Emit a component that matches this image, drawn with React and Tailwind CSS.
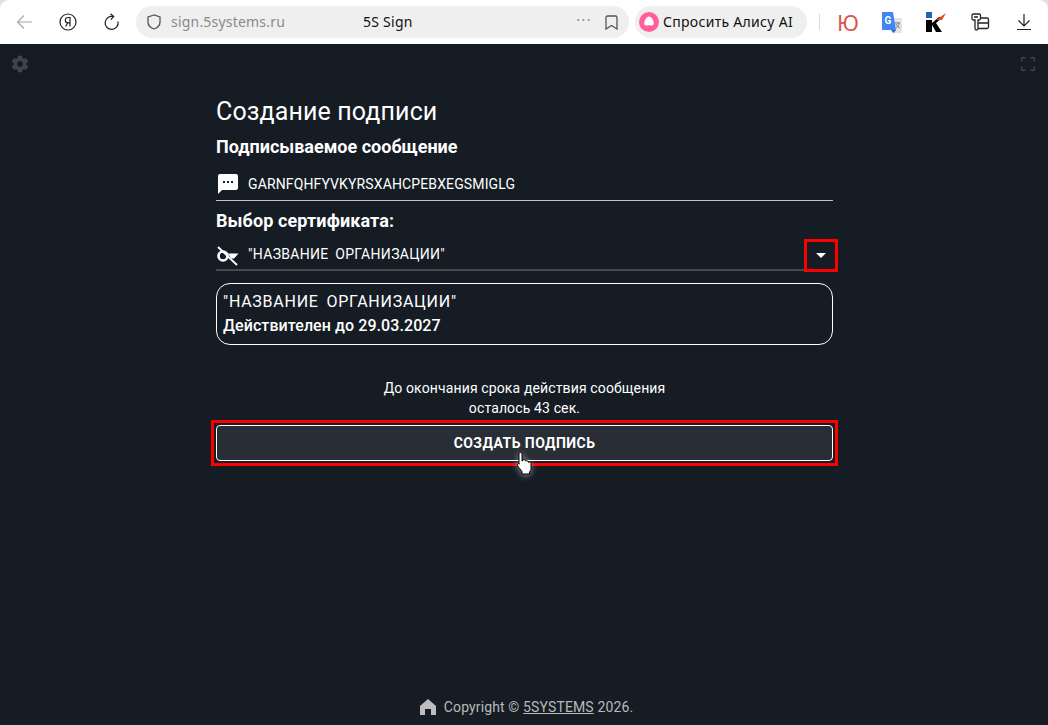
import React from "react";

const roboto = { fontFamily: "Roboto, sans-serif" };

function BrowserBar() {
  return (
    <div className="bg-[#e6dcf0]">
      <div className="flex h-11 items-center rounded-t-[9px] bg-white font-['Noto_Sans',sans-serif] text-[#1a1a1a]">
        <div className="flex w-[136px] shrink-0 items-center">
          <svg className="ml-4 mr-[26px]" width="17" height="16" viewBox="0 0 17 16" fill="none" stroke="#a8a8a8" strokeWidth="1.2">
            <path d="M16 8H1.5M8 1.5 1.5 8 8 14.5" />
          </svg>
          <svg className="mr-[27px]" width="18" height="18" viewBox="0 0 18 18" fill="none" stroke="#222" strokeWidth="1.2">
            <circle cx="9" cy="9" r="8" />
            <path d="M11 13.500v-9H9.200a2.600 2.600 0 0 0-.4 5.300L6.600 13.500M8.800 9.800H11" />
          </svg>
          <svg width="16" height="18" viewBox="0 0 16 18" fill="none" stroke="#222" strokeWidth="1.2">
            <path d="M9.500 3.600A6.500 6.500 0 1 0 14 8.500M6.500.8l3.200 2.800-2.900 3" />
          </svg>
        </div>
        <div className="flex h-8 w-[493px] shrink-0 items-center rounded-2xl bg-[#efefef] pl-[11px] pr-[11px]">
          <svg width="14" height="16" viewBox="0 0 14 16" fill="none" stroke="#555" strokeWidth="1.3">
            <path d="M7 1 1 3v5c0 3.500 3 6 6 7 3-1 6-3.500 6-7V3z" />
          </svg>
          <span className="ml-[10px] w-[192px] text-sm tracking-[0.2px] text-[#8a8a8a]">sign.5systems.ru</span>
          <span className="text-sm tracking-[0.25px] text-[#111]">5S Sign</span>
          <span className="ml-auto mb-1 mr-[13px] text-sm tracking-[1.5px] text-[#8a8a8a]">···</span>
          <svg width="13" height="15" viewBox="0 0 13 15" fill="none" stroke="#555" strokeWidth="1.3">
            <path d="M1 2.500A1.500 1.500 0 0 1 2.500 1h8A1.500 1.500 0 0 1 12 2.500V14L6.500 10.500 1 14z" />
          </svg>
        </div>
        <div className="ml-[6px] flex h-8 w-[172px] shrink-0 items-center rounded-2xl bg-[#efefef] pl-1">
          <svg width="20" height="20" viewBox="0 0 20 20">
            <circle cx="10" cy="10" r="10" fill="#ff5f9c" />
            <path d="M10 4.500c2.200 0 3.500 2.200 4.500 5 1 3-.5 4.500-2.500 4-1.400-.4-2.600-.4-4 0-2 .5-3.500-1-2.500-4 1-2.800 2.300-5 4.500-5z" fill="#fff" />
          </svg>
          <span className="ml-1 text-sm tracking-[0.3px] text-[#111]">Спросить Алису AI</span>
        </div>
        <div className="ml-3 h-4 w-px shrink-0 bg-[#d8d8d8]" />
        <span className="ml-[17px] w-[22px] text-[22px] leading-none text-[#d9564c]">Ю</span>
        <svg className="ml-[23px]" width="20" height="21" viewBox="0 0 20 21">
          <rect x="10" y="6" width="10" height="15" fill="#e4e4e4" />
          <path d="M0 0h11l3 18H0z" fill="#4285f4" />
          <path d="M9 18h5l-2.500 3z" fill="#2a5fc0" />
          <text x="6" y="12" textAnchor="middle" fontSize="10" fontWeight="700" fill="#fff" fontFamily="Roboto, sans-serif">G</text>
          <path d="M13 11h5M15.500 10v1M14 16c2-1 3-3 3-5M14 12c1 2 2 3 4 4" fill="none" stroke="#777" strokeWidth="0.900" />
        </svg>
        <svg className="ml-6" width="20" height="20" viewBox="0 0 20 20">
          <rect x="0" y="0" width="6" height="6" fill="#1f63b5" />
          <path d="M0 8h6v12H0zM6 11l7-6h4l-7 6 6 9h-6l-4-7z" fill="#000" />
          <path d="M10 8l10-7-4 7z" fill="#e8452c" />
        </svg>
        <svg className="ml-[24px]" width="20" height="20" viewBox="0 0 20 20" fill="none" stroke="#222" strokeWidth="1.300">
          <path d="M3.500 2H9a1.500 1.500 0 0 1 1.500 1.500v3A1.500 1.500 0 0 1 9 8H8v8.500a1.500 1.500 0 0 1-3 0V8H3.500A1.500 1.500 0 0 1 2 6.500v-3A1.500 1.500 0 0 1 3.500 2zM4 5h4M10.500 6H17a1.500 1.500 0 0 1 1.500 1.500V15a1.500 1.500 0 0 1-1.500 1.500H8M8 11h10.500" />
        </svg>
        <svg className="ml-[27px]" width="14" height="16" viewBox="0 0 14 16" fill="none" stroke="#222" strokeWidth="1.200">
          <path d="M7 0v11.500M1.500 6.500 7 12l5.500-5.500M0 15.500h14" />
        </svg>
      </div>
    </div>
  );
}

export default function App() {
  return (
    <div className="relative flex h-[725px] flex-col overflow-hidden bg-[#151c24] text-white" style={roboto}>
      <BrowserBar />

      {/* top icons */}
      <div className="flex h-10 shrink-0 items-center justify-between pl-[10px] pr-[13px]">
        <svg width="20" height="20" viewBox="0 0 24 24" fill="#3d444c">
          <path d="M19.430 12.980c.04-.32.07-.64.07-.98s-.03-.66-.07-.98l2.110-1.650c.19-.15.240-.42.120-.64l-2-3.460c-.12-.22-.39-.3-.61-.22l-2.490 1c-.52-.4-1.080-.73-1.690-.98l-.38-2.650C14.460 2.180 14.250 2 14 2h-4c-.25 0-.46.18-.49.420l-.38 2.650c-.61.25-1.170.59-1.690.98l-2.490-1c-.23-.09-.49 0-.61.22l-2 3.460c-.13.22-.07.49.12.64l2.110 1.650c-.04.32-.07.65-.07.98s.03.66.07.98l-2.110 1.650c-.19.15-.24.42-.12.64l2 3.460c.12.22.39.3.61.22l2.490-1c.52.4 1.080.73 1.690.98l.38 2.650c.03.24.24.42.49.42h4c.25 0 .46-.18.49-.42l.38-2.650c.61-.25 1.170-.59 1.690-.98l2.490 1c.23.09.49 0 .61-.22l2-3.460c.12-.22.07-.49-.12-.64l-2.110-1.650zM12 15.500c-1.930 0-3.500-1.570-3.500-3.500s1.570-3.500 3.500-3.500 3.500 1.570 3.500 3.500-1.570 3.500-3.500 3.500z" />
        </svg>
        <svg width="14" height="14" viewBox="0 0 14 14" fill="none" stroke="#3d444c" strokeWidth="1.500">
          <path d="M0.700 4.500V.7h3.800M9.500.7h3.800v3.800M13.300 9.500v3.800H9.500M4.500 13.300H.7V9.500" />
        </svg>
      </div>

      {/* form */}
      <div className="relative ml-[216px] w-[617px]">
        <h1 className="mt-[12px] text-[25px] leading-[32px] tracking-[0.12px] text-white">Создание подписи</h1>
        <h2 className="mt-[7px] text-lg font-bold leading-[24px]">Подписываемое сообщение</h2>

        <div className="mt-[8px] flex h-[34px] items-center border-b border-[#c4c4c4]">
          <svg className="mr-[8px]" width="24" height="24" viewBox="0 0 24 24" fill="#fff">
            <path d="M20 2H4c-1.100 0-2 .9-2 2v18l4-4h14c1.100 0 2-.9 2-2V4c0-1.100-.9-2-2-2zM9 11H7V9h2v2zm4 0h-2V9h2v2zm4 0h-2V9h2v2z" />
          </svg>
          <span className="text-sm tracking-[0.13px] text-white">GARNFQHFYVKYRSXAHCPEBXEGSMIGLG</span>
        </div>

        <h2 className="mt-[8px] text-lg font-bold leading-[24px] tracking-[0.1px]">Выбор сертификата:</h2>

        <div className="mt-[4px] flex h-[34px] items-center border-b-2 border-[#444a50]">
          <svg className="mr-[8px] mt-1" width="24" height="24" viewBox="0 0 24 24" fill="none">
            <circle cx="7" cy="13" r="4.500" stroke="#fff" strokeWidth="2.600" />
            <path d="M2 4 L21 22" stroke="#fff" strokeWidth="1.800" />
            <path d="M12 10.500h10.500l-4.500 5h-3z" fill="#fff" />
          </svg>
          <span className="mt-[2px] text-sm tracking-[0.3px] text-white [word-spacing:3px]">"НАЗВАНИЕ ОРГАНИЗАЦИИ"</span>
          <svg className="ml-auto mr-[7px] mt-[5px]" width="10" height="5" viewBox="0 0 10 5" fill="#fff">
            <path d="M0 0h10L5 5z" />
          </svg>
        </div>

        <div className="mt-[12px] flex h-[62px] flex-col justify-center rounded-[14px] border border-white px-[6px]">
          <span className="text-base leading-[24px] tracking-[0.75px] text-white [word-spacing:3px]">"НАЗВАНИЕ ОРГАНИЗАЦИИ"</span>
          <span className="text-base font-medium leading-[24px] tracking-[0.08px] text-white">Действителен до 29.03.2027</span>
        </div>

        <p className="mt-[33px] text-center text-sm leading-[20px] tracking-[0.13px] text-white">
          До окончания срока действия сообщения
          <br />
          осталось 43 сек.
        </p>

        <button className="mt-[7px] block h-[36px] w-full rounded border border-white bg-[#292d36] pb-[1px] text-sm font-bold tracking-[0.45px] text-white">
          СОЗДАТЬ ПОДПИСЬ
        </button>

        {/* red annotation boxes */}
        <div className="absolute left-[588px] top-[155px] h-[33px] w-[34px] border-[3px] border-[#ff0000]" />
        <div className="absolute left-[-5px] top-[336px] h-[46px] w-[627px] border-[3px] border-[#ff0000]" />

        {/* pointer cursor */}
        <svg className="absolute left-[300px] top-[367px] drop-shadow-[0_1px_3px_rgba(255,255,255,0.5)]" width="18" height="24" viewBox="0 0 18 24">
          <path d="M4.500 1.500c1 0 1.500.7 1.500 1.500v7l.8-.2V8.500c1.500-.6 2.200 0 2.200 1.200l.8.1c1.400-.5 2.200.2 2.200 1.300l.8.1c1.300-.4 2.200.3 2.200 1.500v4.800c0 1.500-.8 2.500-1.500 3.500v2H6v-2.500c-1-1.500-3.500-4-4.500-6-.5-1.200.6-2.200 1.700-1.500L3 13V3c0-.8.600-1.500 1.500-1.500z" fill="#fff" stroke="#000" strokeWidth="1" />
        </svg>
      </div>

      {/* footer */}
      <div className="mt-auto mb-[8px] flex h-[20px] items-center justify-center pl-[4px] text-sm tracking-[0.13px] text-[#b9b9b9]">
        <svg className="mr-[7px]" width="18" height="18" viewBox="0 0 18 18" fill="#bdbdbd">
          <path d="M9 1 1 8v9h5v-6h6v6h5V8z" />
        </svg>
        <span>
          Copyright © <span className="underline">5SYSTEMS</span> 2026.
        </span>
      </div>
    </div>
  );
}
